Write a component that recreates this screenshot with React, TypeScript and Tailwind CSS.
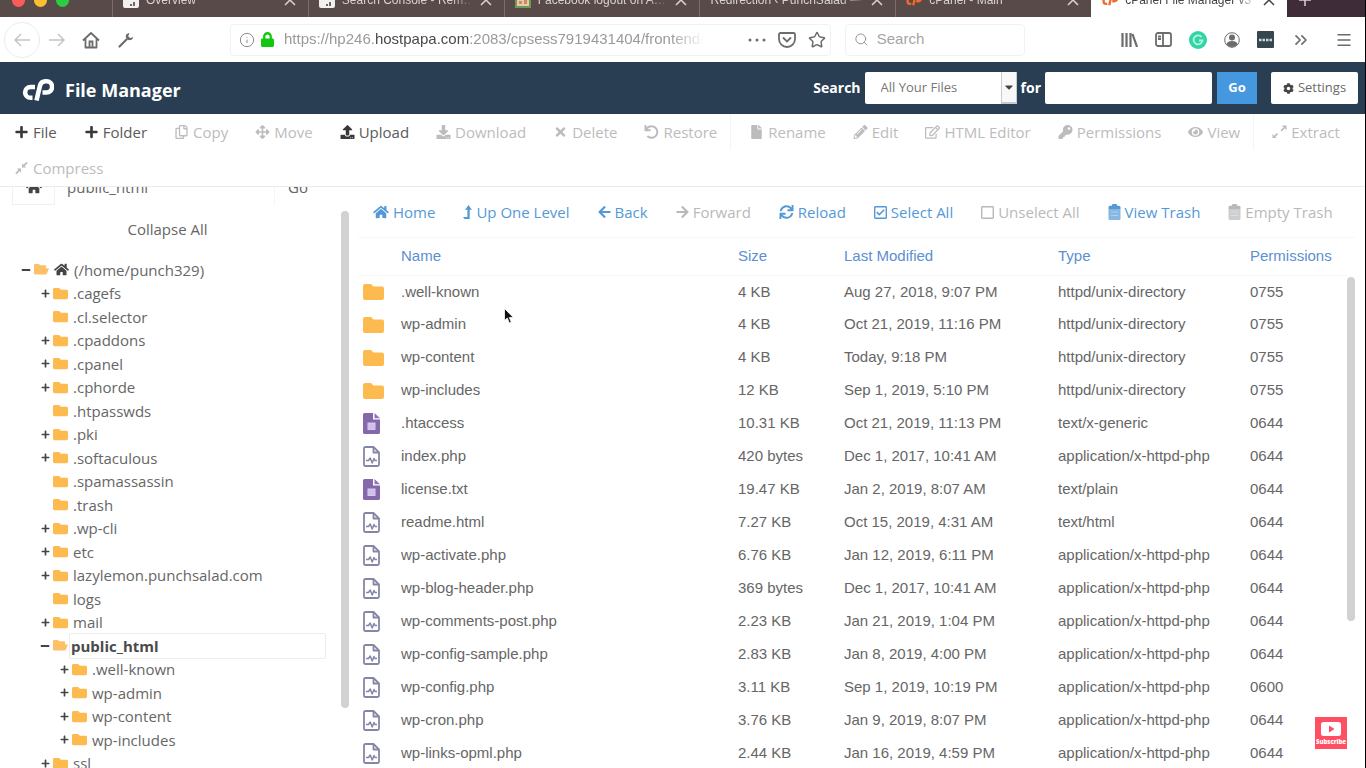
import React from "react";
import {
  FaArrowLeft,
  FaArrowRight,
  FaArrowsAlt,
  FaCaretDown,
  FaCog,
  FaDownload,
  FaEye,
  FaFile,
  FaFolder,
  FaHome,
  FaKey,
  FaLock,
  FaMinus,
  FaPencilAlt,
  FaPlus,
  FaRegCheckSquare,
  FaRegCopy,
  FaRegEdit,
  FaRegSquare,
  FaSync,
  FaTimes,
  FaUndo,
  FaUpload,
} from "react-icons/fa";
import { ChevronsRight, Info, Menu, Search, Star } from "lucide-react";

type Icon = React.ComponentType<{ className?: string }>;

const ExpandIcon: Icon = ({ className }) => (
  <svg viewBox="0 0 16 14" className={className} fill="currentColor" stroke="currentColor">
    <path d="M10.500 0H15.500V5zM.5 9v4.500H5z" stroke="none" />
    <path d="m9.800 5.700 3-3M3 11.500l2.800-2.800" strokeWidth="1.800" />
  </svg>
);

const CompressIcon: Icon = ({ className }) => (
  <svg viewBox="0 0 16 14" className={className} fill="currentColor" stroke="currentColor">
    <path d="M8.500 2v4.500H13zM7.500 12V7.500H3z" stroke="none" />
    <path d="m10.500 4.500 3.500-3.500M2 13l3.500-3.500" strokeWidth="1.800" />
  </svg>
);

const LevelUpIcon: Icon = ({ className }) => (
  <svg viewBox="0 0 9 14" className={className} fill="currentColor">
    <path d="M5.500 0 9 4.800H6.700V14H1.500L0 12h4.400V4.800H2z" />
  </svg>
);

const TrashIcon: Icon = ({ className }) => (
  <svg viewBox="0 0 12 16" className={className} fill="currentColor">
    <path d="M4 0h4l.8 1.800h1.700q1.500 0 1.500 1.500V5H0V3.300q0-1.500 1.500-1.500h1.700z" />
    <path d="M0 5h12v9.500q0 1.500-1.500 1.500h-9Q0 16 0 14.500z" opacity=".7" />
    <path d="M2.500 8h7M2.500 11.500h7" stroke="#fff" strokeWidth=".7" opacity=".5" />
  </svg>
);

const OpenFolderIcon: Icon = ({ className }) => (
  <svg viewBox="0 0 17 12" className={className} fill="currentColor">
    <path d="M1.500 0h4l1.500 1.500h5.500q1.300 0 1.300 1.300V5H17l-2.500 6q-.4 1-1.500 1H1.500Q0 12 0 10.500v-9Q0 0 1.500 0z" />
  </svg>
);

type TabIcon = "console" | "facebook" | "cpanel" | null;

const tabs: { title: string; icon: TabIcon; active?: boolean }[] = [
  { title: "Overview", icon: "console" },
  { title: "Search Console - Rem…", icon: "console" },
  { title: "Facebook logout on A…", icon: "facebook" },
  { title: "Redirection ‹ PunchSalad —", icon: null },
  { title: "cPanel - Main", icon: "cpanel" },
  { title: "cPanel File Manager v3", icon: "cpanel", active: true },
];

const tools: {
  label: string;
  icon: Icon;
  enabled?: boolean;
  separated?: boolean;
}[] = [
  { label: "File", icon: FaPlus, enabled: true },
  { label: "Folder", icon: FaPlus, enabled: true },
  { label: "Copy", icon: FaRegCopy },
  { label: "Move", icon: FaArrowsAlt },
  { label: "Upload", icon: FaUpload, enabled: true },
  { label: "Download", icon: FaDownload },
  { label: "Delete", icon: FaTimes },
  { label: "Restore", icon: FaUndo },
  { label: "Rename", icon: FaFile, separated: true },
  { label: "Edit", icon: FaPencilAlt },
  { label: "HTML Editor", icon: FaRegEdit },
  { label: "Permissions", icon: FaKey },
  { label: "View", icon: FaEye },
  { label: "Extract", icon: ExpandIcon, separated: true },
  { label: "Compress", icon: CompressIcon },
];

const actions: {
  label: string;
  icon: Icon;
  size: string;
  enabled?: boolean;
}[] = [
  { label: "Home", icon: FaHome, size: "w-4 h-3.5", enabled: true },
  { label: "Up One Level", icon: LevelUpIcon, size: "w-[9px] h-3.5", enabled: true },
  { label: "Back", icon: FaArrowLeft, size: "w-[13px] h-3.5", enabled: true },
  { label: "Forward", icon: FaArrowRight, size: "w-[13px] h-3.5" },
  { label: "Reload", icon: FaSync, size: "w-[15px] h-3.5", enabled: true },
  { label: "Select All", icon: FaRegCheckSquare, size: "w-[13px] h-[15px]", enabled: true },
  { label: "Unselect All", icon: FaRegSquare, size: "w-[13px] h-[15px]" },
  { label: "View Trash", icon: TrashIcon, size: "w-[13px] h-4", enabled: true },
  { label: "Empty Trash", icon: TrashIcon, size: "w-[13px] h-4" },
];

type Node = { name: string; depth: number; state?: "open" | "closed" };

const tree: Node[] = [
  { name: "(/home/punch329)", depth: 0, state: "open" },
  { name: ".cagefs", depth: 1, state: "closed" },
  { name: ".cl.selector", depth: 1 },
  { name: ".cpaddons", depth: 1, state: "closed" },
  { name: ".cpanel", depth: 1, state: "closed" },
  { name: ".cphorde", depth: 1, state: "closed" },
  { name: ".htpasswds", depth: 1 },
  { name: ".pki", depth: 1, state: "closed" },
  { name: ".softaculous", depth: 1, state: "closed" },
  { name: ".spamassassin", depth: 1 },
  { name: ".trash", depth: 1 },
  { name: ".wp-cli", depth: 1, state: "closed" },
  { name: "etc", depth: 1, state: "closed" },
  { name: "lazylemon.punchsalad.com", depth: 1, state: "closed" },
  { name: "logs", depth: 1 },
  { name: "mail", depth: 1, state: "closed" },
  { name: "public_html", depth: 1, state: "open" },
  { name: ".well-known", depth: 2, state: "closed" },
  { name: "wp-admin", depth: 2, state: "closed" },
  { name: "wp-content", depth: 2, state: "closed" },
  { name: "wp-includes", depth: 2, state: "closed" },
  { name: "ssl", depth: 1, state: "closed" },
];

const indents = ["pl-5", "pl-[39px]", "pl-[58px]"];

type FileKind = "folder" | "text" | "code";

const files: [FileKind, string, string, string, string, string][] = [
  ["folder", ".well-known", "4 KB", "Aug 27, 2018, 9:07 PM", "httpd/unix-directory", "0755"],
  ["folder", "wp-admin", "4 KB", "Oct 21, 2019, 11:16 PM", "httpd/unix-directory", "0755"],
  ["folder", "wp-content", "4 KB", "Today, 9:18 PM", "httpd/unix-directory", "0755"],
  ["folder", "wp-includes", "12 KB", "Sep 1, 2019, 5:10 PM", "httpd/unix-directory", "0755"],
  ["text", ".htaccess", "10.31 KB", "Oct 21, 2019, 11:13 PM", "text/x-generic", "0644"],
  ["code", "index.php", "420 bytes", "Dec 1, 2017, 10:41 AM", "application/x-httpd-php", "0644"],
  ["text", "license.txt", "19.47 KB", "Jan 2, 2019, 8:07 AM", "text/plain", "0644"],
  ["code", "readme.html", "7.27 KB", "Oct 15, 2019, 4:31 AM", "text/html", "0644"],
  ["code", "wp-activate.php", "6.76 KB", "Jan 12, 2019, 6:11 PM", "application/x-httpd-php", "0644"],
  ["code", "wp-blog-header.php", "369 bytes", "Dec 1, 2017, 10:41 AM", "application/x-httpd-php", "0644"],
  ["code", "wp-comments-post.php", "2.23 KB", "Jan 21, 2019, 1:04 PM", "application/x-httpd-php", "0644"],
  ["code", "wp-config-sample.php", "2.83 KB", "Jan 8, 2019, 4:00 PM", "application/x-httpd-php", "0644"],
  ["code", "wp-config.php", "3.11 KB", "Sep 1, 2019, 10:19 PM", "application/x-httpd-php", "0600"],
  ["code", "wp-cron.php", "3.76 KB", "Jan 9, 2019, 8:07 PM", "application/x-httpd-php", "0644"],
  ["code", "wp-links-opml.php", "2.44 KB", "Jan 16, 2019, 4:59 PM", "application/x-httpd-php", "0644"],
];

const CpLogo: Icon = ({ className }) => (
  <svg viewBox="0 0 32 24" className={className} fill="none" stroke="currentColor">
    <path d="M13 9H8.500a5.400 5.400 0 0 0 0 10.800h2" strokeWidth="4.600" />
    <path
      d="M14.500 22.500 18 7.500q1-4.300 5.500-4.300h1a5 5 0 0 1 0 11.300H20.500"
      strokeWidth="4.600"
      strokeLinejoin="round"
    />
  </svg>
);

const Favicon: React.FC<{ icon: TabIcon }> = ({ icon }) => {
  if (icon === "cpanel") {
    return <CpLogo className="w-4 h-3 shrink-0 text-[#f26a2e]" />;
  }
  if (icon === "facebook") {
    return (
      <svg viewBox="0 0 16 16" className="w-4 h-4 shrink-0">
        <rect width="16" height="16" fill="#6f9a55" />
        <rect x="2" y="1" width="12" height="13" fill="#e9c9a8" />
        <path d="M4 12V9h3v3zM9 12V8h3v4z" fill="#c98a6b" />
      </svg>
    );
  }
  if (icon === "console") {
    return (
      <svg viewBox="0 0 16 16" className="w-4 h-4 shrink-0">
        <rect width="16" height="16" rx="2" fill="#f2efef" />
        <path d="M2 3h12v3H2z" fill="#9a9292" />
        <path d="M11 10v4M8 12v2" stroke="#6e6464" strokeWidth="2" />
      </svg>
    );
  }
  return null;
};

const FileIcon: React.FC<{ kind: FileKind }> = ({ kind }) => {
  if (kind === "folder") {
    return (
      <svg viewBox="0 0 21 16" className="w-[21px] h-4">
        <path
          d="M2 0h6l2.500 2.500H19a2 2 0 0 1 2 2V14a2 2 0 0 1-2 2H2a2 2 0 0 1-2-2V2a2 2 0 0 1 2-2z"
          fill="#fdbb4f"
        />
      </svg>
    );
  }
  if (kind === "text") {
    return (
      <svg viewBox="0 0 17 21" className="w-[17px] h-[21px]">
        <path
          d="M1.500 0H10v6.500h7v13a1.500 1.500 0 0 1-1.500 1.500h-14A1.500 1.500 0 0 1 0 19.500v-18A1.500 1.500 0 0 1 1.500 0z"
          fill="#8468ab"
        />
        <path d="M11.500 0 17 5.200h-5.500z" fill="#8f78b0" />
        <path d="M4.500 9.500h8v7.500h-8z" fill="#d6c8ea" />
        <path d="M4.500 12.300h8M4.500 14.700h8" stroke="#c4b3de" strokeWidth=".7" />
      </svg>
    );
  }
  return (
    <svg
      viewBox="0 0 17 21"
      className="w-[17px] h-[21px]"
      fill="none"
      stroke="#8585a8"
      strokeWidth="1.800"
      strokeLinejoin="round"
    >
      <path d="M2.500 1h8L16 6.500v12q0 1.500-1.500 1.500h-12Q1 20 1 18.500v-16Q1 1 2.500 1z" />
      <path d="M10.500 1v5.500H16" />
      <path d="M3 14.500h2.500l1.700-2.500 2 5 1.800-4.500 1 2H14" strokeWidth="1.500" />
    </svg>
  );
};

const TabStrip: React.FC = () => (
  <div className="h-[17px] shrink-0 overflow-hidden bg-[#584a49]">
    <div className="-mt-[17px] h-[34px] flex text-xs font-['Liberation_Sans',sans-serif]">
      <div className="w-28 shrink-0 flex items-center gap-[9px] pl-3">
        <span className="w-[13px] h-[13px] rounded-full bg-[#fc5b57]" />
        <span className="w-[13px] h-[13px] rounded-full bg-[#fdbe2f]" />
        <span className="w-[13px] h-[13px] rounded-full bg-[#2bcb42]" />
      </div>
      {tabs.map((tab) => (
        <div
          key={tab.title}
          className={`flex-1 min-w-0 flex items-center gap-[7px] pl-2.5 pr-3 border-l ${
            tab.active
              ? "bg-white text-[#444] border-white"
              : "text-[#d8d2d2] border-[#7a6d6c]"
          }`}
        >
          <Favicon icon={tab.icon} />
          <span className="flex-1 min-w-0 whitespace-nowrap overflow-hidden [mask-image:linear-gradient(to_right,#000_85%,transparent)]">
            {tab.title}
          </span>
          <button aria-label="Close tab">
            <svg viewBox="0 0 12 12" className="w-3 h-3" stroke="currentColor" strokeWidth="1.500">
              <path d="m1 1 10 10M11 1 1 11" />
            </svg>
          </button>
        </div>
      ))}
      <div className="w-[78px] shrink-0 flex items-center pl-3 bg-[#3e2d39] text-[#d8d2d2]">
        <button aria-label="New tab">
          <svg viewBox="0 0 12 12" className="w-3 h-3" stroke="currentColor" strokeWidth="1.500">
            <path d="M6 0v12M0 6h12" />
          </svg>
        </button>
      </div>
    </div>
  </div>
);

const BrowserBar: React.FC = () => (
  <div className="h-[45px] shrink-0 flex items-center pl-1 pr-3 text-[#6c6c6c] font-['Liberation_Sans',sans-serif]">
    <button
      aria-label="Back"
      className="w-9 h-9 rounded-full border border-[#ececec] flex items-center justify-center text-[#c4c4c4]"
    >
      <svg viewBox="0 0 16 14" className="w-4 h-3.5" fill="none" stroke="currentColor" strokeWidth="1.500">
        <path d="M16 7H1M7 1 1 7l6 6" />
      </svg>
    </button>
    <button aria-label="Forward" className="ml-[9px] text-[#c4c4c4]">
      <svg viewBox="0 0 16 14" className="w-4 h-3.5" fill="none" stroke="currentColor" strokeWidth="1.500">
        <path d="M0 7h15M9 1l6 6-6 6" />
      </svg>
    </button>
    <button aria-label="Home" className="ml-[17px]">
      <svg viewBox="0 0 18 18" className="w-[18px] h-[18px]" fill="none" stroke="currentColor" strokeWidth="1.800">
        <path d="M1 9.500 9 2l8 7.500M3.500 8v8.500h11V8" strokeLinejoin="round" />
        <path d="M7.500 16.500v-6h3v6" />
      </svg>
    </button>
    <button aria-label="Tools" className="ml-[18px]">
      <svg viewBox="0 0 16 16" className="w-4 h-4" fill="none" stroke="currentColor">
        <path d="m1.500 14.500 7-7" strokeWidth="2.200" strokeLinecap="round" />
        <path
          d="M11.500 1.200C8.500 1 7.200 3.500 8 5.500c.6 2 2.500 3 4.500 2.500 1.500-.3 2.500-1.300 2.800-2.800L12 6 10.200 4.200z"
          fill="currentColor"
          stroke="none"
        />
      </svg>
    </button>
    <div className="ml-24 flex-1 min-w-0 h-8 flex items-center rounded border border-[#f2f2f2] pl-2 pr-1">
      <Info className="w-4 h-4 text-[#8b8b8b]" strokeWidth={1.5} />
      <FaLock className="ml-1.5 w-[13px] h-[15px] text-[#12c612]" />
      <div
        role="textbox"
        aria-label="Address"
        contentEditable
        suppressContentEditableWarning
        className="ml-2.5 w-[420px] text-[15px] whitespace-nowrap overflow-hidden text-[#9a9a9a] [mask-image:linear-gradient(to_right,#000_92%,transparent)]"
      >
        https://hp246.<span className="text-[#4a4a4a]">hostpapa.com</span>
        :2083/cpsess7919431404/frontend/
      </div>
      <button aria-label="Page actions" className="ml-auto">
        <svg viewBox="0 0 18 4" className="w-[18px] h-1" fill="currentColor">
          <circle cx="2" cy="2" r="1.500" />
          <circle cx="9" cy="2" r="1.500" />
          <circle cx="16" cy="2" r="1.500" />
        </svg>
      </button>
      <button aria-label="Save to Pocket" className="ml-3">
        <svg viewBox="0 0 18 16" className="w-[18px] h-4" fill="none" stroke="currentColor" strokeWidth="1.800">
          <path d="M2.500 1h13A1.500 1.500 0 0 1 17 2.500V7A8 8 0 0 1 1 7V2.500A1.500 1.500 0 0 1 2.500 1z" />
          <path d="m5.500 6 3.500 3.500L12.500 6" strokeLinecap="round" />
        </svg>
      </button>
      <button aria-label="Bookmark" className="ml-3">
        <Star className="w-[18px] h-[18px]" />
      </button>
    </div>
    <label className="ml-3.5 w-[180px] h-8 flex items-center gap-2 rounded border border-[#f2f2f2] pl-2">
      <Search className="w-[17px] h-[17px] text-[#8b8b8b]" strokeWidth={1.5} />
      <input
        type="search"
        aria-label="Search the web"
        placeholder="Search"
        className="w-full min-w-0 text-[15px] outline-none placeholder:text-[#a5a5a5]"
      />
    </label>
    <div className="ml-24 flex items-center gap-[17px]">
      <button aria-label="Library">
        <svg viewBox="0 0 17 14" className="w-[17px] h-3.5" stroke="currentColor" strokeWidth="2.200">
          <path d="M1.500 0v14M5.500 0v14M9.500 0v14M11.500 1l4.500 13" />
        </svg>
      </button>
      <button aria-label="Sidebars">
        <svg viewBox="0 0 17 15" className="w-[17px] h-[15px]" fill="none" stroke="currentColor" strokeWidth="1.800">
          <rect x="1" y="1" width="15" height="13" rx="2" />
          <path d="M8 1v13M3 4.500h3M3 7h3" />
        </svg>
      </button>
      <button aria-label="Grammarly">
        <svg viewBox="0 0 18 18" className="w-[18px] h-[18px]" fill="none">
          <circle cx="9" cy="9" r="9" fill="#2fd6a4" />
          <path d="M12.500 6A4.500 4.500 0 1 0 13.500 9.500H10" stroke="#b9f5e2" strokeWidth="1.800" />
        </svg>
      </button>
      <button aria-label="Account">
        <svg viewBox="0 0 16 16" className="w-4 h-4">
          <circle cx="8" cy="8" r="7.300" fill="none" stroke="currentColor" />
          <circle cx="8" cy="5.500" r="3" fill="currentColor" />
          <path d="M2.500 12q1-3 5.500-3t5.500 3q-2 3-5.500 3t-5.500-3z" fill="currentColor" />
        </svg>
      </button>
      <button aria-label="Extension">
        <svg viewBox="0 0 17 17" className="w-[17px] h-[17px]">
          <rect width="17" height="17" rx="1" fill="#37474f" />
          <path d="M2 9h13" stroke="#cfd8dc" strokeWidth="2.500" strokeDasharray="2.500 1" />
        </svg>
      </button>
      <button aria-label="More tools">
        <ChevronsRight className="w-5 h-5" />
      </button>
    </div>
    <button aria-label="Menu" className="ml-6">
      <Menu className="w-[18px] h-[18px]" />
    </button>
  </div>
);

const Header: React.FC = () => (
  <header className="h-[52px] shrink-0 bg-[#293e53] text-white flex items-center pl-[22px] pr-[7px]">
    <div className="flex items-center gap-[11px] pt-1">
      <CpLogo className="w-8 h-6" />
      <h1 className="text-lg font-bold">File Manager</h1>
    </div>
    <label htmlFor="scope" className="ml-auto text-sm font-bold">
      Search
    </label>
    <div className="relative ml-1">
      <select
        id="scope"
        className="appearance-none w-[152px] h-8 rounded-xs bg-white pl-4 text-[13px] text-[#777]"
      >
        <option>All Your Files</option>
      </select>
      <span className="absolute right-0 top-0 h-8 w-4 border-x border-b-2 border-[#c5cad3] bg-[#f8f8f8] flex items-center justify-center text-[#444] pointer-events-none">
        <FaCaretDown className="w-2" />
      </span>
    </div>
    <label htmlFor="query" className="ml-1 text-sm font-bold">
      for
    </label>
    <input id="query" className="ml-1 w-[167px] h-8 rounded-xs bg-white px-2 text-sm text-[#555]" />
    <button className="ml-[5px] w-10 h-8 bg-[#4598de] text-[13px] font-bold">
      Go
    </button>
    <button className="ml-3.5 w-[87px] h-8 rounded-xs bg-white flex items-center justify-center gap-1 text-[13px] text-[#6a6a6a]">
      <FaCog className="w-[11px] text-[#444]" />
      Settings
    </button>
  </header>
);

const Toolbar: React.FC = () => (
  <div className="shrink-0 flex flex-wrap border-b border-[#ebebeb]">
    {tools.map(({ label, icon: Icon, enabled, separated }) => (
      <button
        key={label}
        disabled={!enabled}
        className={`h-9 flex items-center gap-1 pr-[13px] text-[15px] leading-5 ${
          enabled ? "text-[#5a5a5a]" : "text-[#bcbcbc]"
        } ${separated ? "border-l border-[#f4f4f4] pl-[18px]" : "pl-3.5"}`}
      >
        <Icon className={`w-[15px] h-3.5 ${enabled ? "text-[#383838]" : ""}`} />
        {label}
      </button>
    ))}
  </div>
);

const Sidebar: React.FC = () => (
  <aside className="w-[349px] shrink-0 flex flex-col text-[#666] text-[15px] leading-5">
    <div className="h-[18px] shrink-0 overflow-hidden">
      <div className="-mt-[18px] h-9 flex pl-3 pr-7">
        <button
          aria-label="Home directory"
          className="w-[43px] border border-[#f1f1f1] flex items-center justify-center"
        >
          <FaHome className="w-4 h-4 text-[#444]" />
        </button>
        <input
          aria-label="Path"
          defaultValue="public_html"
          className="flex-1 min-w-0 px-3 border-r border-[#f6f6f6] outline-none"
        />
        <button className="w-[46px]">Go</button>
      </div>
    </div>
    <div className="flex-1 min-h-0 flex">
      <div className="flex-1 min-w-0">
        <div className="h-[53px] flex items-start justify-center pt-3.5">
          <button className="mr-1.5">Collapse All</button>
        </div>
        <ul>
          {tree.map((node) => {
            const selected = node.name === "public_html";
            return (
              <li
                key={`${node.depth}${node.name}`}
                className={`odd:h-[23px] even:h-6 flex items-center pr-[15px] ${
                  indents[node.depth]
                }`}
              >
                <span className="w-3 shrink-0 flex justify-center text-[#444]">
                  {node.state === "closed" && <FaPlus className="w-[9px] h-[9px]" />}
                  {node.state === "open" && <FaMinus className="w-2.5 h-2.5" />}
                </span>
                {node.state === "open" ? (
                  <OpenFolderIcon className="ml-0.5 w-[15px] shrink-0 text-[#fdc066]" />
                ) : (
                  <FaFolder className="ml-0.5 w-[15px] shrink-0 text-[#fdbb4f]" />
                )}
                {node.depth === 0 && (
                  <FaHome className="ml-[5px] w-[15px] shrink-0 text-[#444]" />
                )}
                {selected ? (
                  <a
                    href="#public_html"
                    className="ml-px flex-1 h-[26px] flex items-center border border-[#ededed] rounded-xs pl-px font-bold text-[#4a4a4a]"
                  >
                    {node.name}
                  </a>
                ) : (
                  <a href={`#${node.name}`} className="ml-[5px]">
                    {node.name}
                  </a>
                )}
              </li>
            );
          })}
        </ul>
      </div>
      <div className="mt-1.5 w-2 h-[497px] rounded-full bg-[#d2d2d2]" />
    </div>
  </aside>
);

const Listing: React.FC = () => (
  <main className="flex-1 min-w-0 pl-[9px] pr-2.5">
    <div className="h-[51px] flex items-center gap-7 pl-[15px] border-b border-[#f7f7f7]">
      {actions.map(({ label, icon: Icon, size, enabled }) => (
        <button
          key={label}
          disabled={!enabled}
          className={`flex items-center gap-1 text-[15px] leading-5 whitespace-nowrap ${
            enabled ? "text-[#5499d6]" : "text-[#b9b9b9]"
          }`}
        >
          <Icon className={size} />
          {label}
        </button>
      ))}
    </div>
    <div className="flex font-['Liberation_Sans',sans-serif] text-[15px]">
      <table className="flex-1 min-w-0 table-fixed text-left text-[#666]">
        <thead className="text-[#5b8fd0]">
          <tr className="h-[37px] border-b border-[#f7f7f7]">
            <th className="w-[43px]" aria-label="Kind" />
            <th className="font-normal">Name</th>
            <th className="w-[106px] font-normal">Size</th>
            <th className="w-[214px] font-normal">Last Modified</th>
            <th className="w-48 font-normal">Type</th>
            <th className="w-[97px] font-normal">Permissions</th>
          </tr>
        </thead>
        <tbody>
          {files.map(([kind, name, size, modified, type, permissions]) => (
            <tr key={name} className="h-[33px]">
              <td className="pl-[5px]">
                <FileIcon kind={kind} />
              </td>
              <td>{name}</td>
              <td>{size}</td>
              <td>{modified}</td>
              <td>{type}</td>
              <td>{permissions}</td>
            </tr>
          ))}
        </tbody>
      </table>
      <div className="mt-[39px] w-2 h-[344px] rounded-full bg-[#d2d2d2]" />
    </div>
  </main>
);

const App: React.FC = () => {
  return (
    <div className="relative h-screen overflow-hidden flex flex-col bg-white border-r border-black font-['Open_Sans',sans-serif]">
      <TabStrip />
      <BrowserBar />
      <Header />
      <Toolbar />
      <div className="flex-1 min-h-0 flex overflow-hidden">
        <Sidebar />
        <Listing />
      </div>
      <svg viewBox="0 0 10 16" className="absolute left-[504px] top-[308px] w-2.5 h-4">
        <path
          d="M.5.5v12l2.800-2.500 2 5 2-.8-2-4.700h4z"
          fill="#111"
          stroke="#fff"
          strokeWidth=".8"
        />
      </svg>
      <button className="absolute right-[18px] bottom-[19px] w-8 h-8 bg-[#ff4f63] text-white flex flex-col items-center pt-[5px]">
        <svg viewBox="0 0 20 14" className="w-5 h-3.5">
          <rect width="20" height="14" rx="2.500" fill="#fff" />
          <path d="m8 3.500 5.500 3.500L8 10.500z" fill="#ff4f63" />
        </svg>
        <span className="mt-[3px] text-[6px] leading-[6px] font-extrabold">
          Subscribe
        </span>
      </button>
    </div>
  );
};

export default App;
